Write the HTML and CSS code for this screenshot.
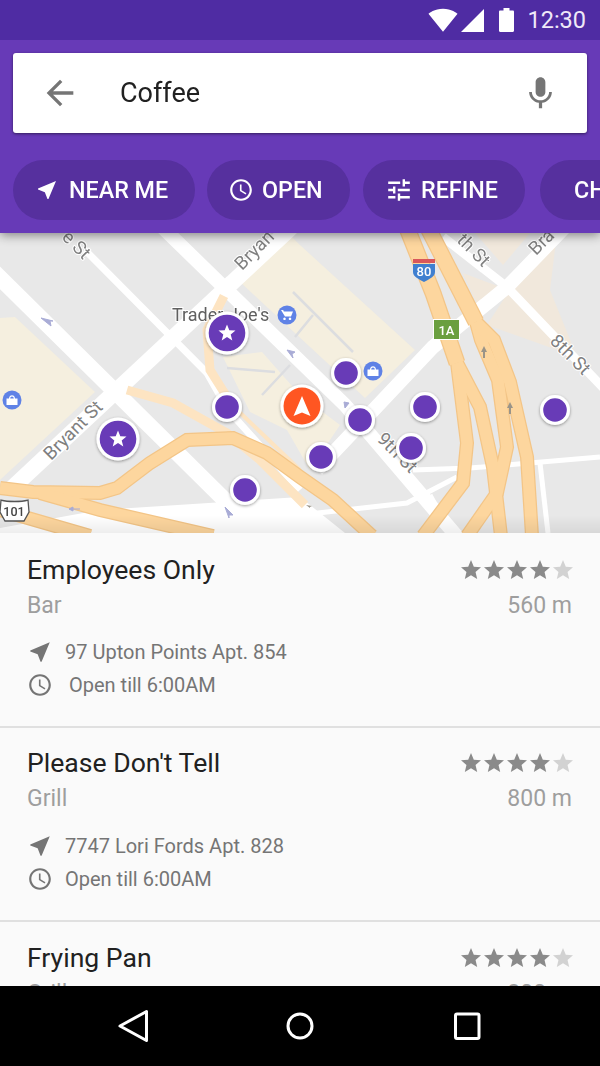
FILE: index.html
```html
<!DOCTYPE html>
<html lang="en">

<head>
    <meta charset="UTF-8" />
    <title>Coffee search</title>
    <link rel="stylesheet" href="styles.css">
</head>

<body>

    <!-- Shared icons -->
    <svg class="icon-defs" width="0" height="0">
        <symbol id="i-near" viewBox="0 0 24 24"><path d="M21 3L3 10.53v.98l6.84 2.65L12.48 21h.98L21 3z" /></symbol>
        <symbol id="i-clock" viewBox="0 0 24 24"><path d="M11.99 2C6.47 2 2 6.48 2 12s4.47 10 9.99 10C17.52 22 22 17.52 22 12S17.52 2 11.99 2zM12 20c-4.42 0-8-3.58-8-8s3.58-8 8-8 8 3.58 8 8-3.58 8-8 8z" /><path d="M12.5 7H11v6l5.25 3.15.75-1.23-4.5-2.67z" /></symbol>
        <symbol id="i-star" viewBox="0 0 24 24"><path d="M12 17.27L18.18 21l-1.64-7.03L22 9.24l-7.19-.61L12 2 9.19 8.63 2 9.24l5.46 4.73L5.82 21z" /></symbol>
    </svg>

    <header class="top">
        <div class="status">
            <svg class="st-wifi" viewBox="0 0 24 24" preserveAspectRatio="none"><path d="M12.01 21.49L23.64 7c-.45-.34-4.93-4-11.64-4C5.28 3 .81 6.66.36 7l11.63 14.49.01.01.01-.01z" /></svg>
            <svg class="st-signal" viewBox="0 0 23 23"><path d="M0 23h23V0z" /></svg>
            <svg class="st-battery" viewBox="0 0 15 24"><path d="M4.500 0h6v2.500h3.300c.7 0 1.200.5 1.200 1.200v19.100c0 .7-.5 1.200-1.200 1.200H1.200C.5 24 0 23.500 0 22.800V3.700c0-.7.5-1.200 1.200-1.200h3.300z" /></svg>
            <span class="clock">12:30</span>
        </div>

        <div class="search">
            <svg class="search-back" viewBox="0 0 24 24"><path d="M20 11H7.830l5.590-5.590L12 4l-8 8 8 8 1.410-1.410L7.830 13H20v-2z" /></svg>
            <span class="search-text">Coffee</span>
            <svg class="search-mic" viewBox="0 0 24 24"><path d="M12 14c1.660 0 2.990-1.340 2.990-3L15 5c0-1.660-1.340-3-3-3S9 3.340 9 5v6c0 1.660 1.340 3 3 3zm5.300-3c0 3-2.540 5.100-5.300 5.100S6.700 14 6.700 11H5c0 3.410 2.720 6.230 6 6.720V21h2v-3.280c3.280-.48 6-3.300 6-6.720h-1.700z" /></svg>
        </div>

        <!-- Filtros -->
        <div class="chips">
            <div class="chip chip-near"><svg class="chip-icon"><use href="#i-near" /></svg>NEAR ME</div>
            <div class="chip chip-open"><svg class="chip-icon"><use href="#i-clock" /></svg>OPEN</div>
            <div class="chip chip-refine"><svg class="chip-icon" viewBox="2 2 20 20"><path d="M3 17v2h6v-2H3zM3 5v2h10V5H3zm10 16v-2h8v-2h-8v-2h-2v6h2zM7 9v2H3v2h4v2h2V9H7zm14 4v-2H11v2h10zm-6-4h2V7h4V5h-4V3h-2v6z" /></svg>REFINE</div>
            <div class="chip chip-cheap">CH</div>
        </div>
    </header>

    <!-- Mapa -->
    <svg class="map" viewBox="0 233 600 300">
        <defs>
            <filter id="pin-shadow" x="-30%" y="-30%" width="160%" height="160%">
                <feDropShadow dx="0" dy="1" stdDeviation="1.500" flood-color="#000" flood-opacity="0.4" />
            </filter>
            <linearGradient id="map-fade" x1="0" y1="0" x2="0" y2="1">
                <stop offset="0" stop-color="#000" stop-opacity="0" />
                <stop offset="1" stop-color="#000" stop-opacity="0.07" />
            </linearGradient>
            <symbol id="pin" viewBox="-15 -15 30 30" overflow="visible">
                <circle r="15" fill="#fff" />
                <circle r="11.800" fill="#673ab7" />
            </symbol>
            <g id="pin-star">
                <circle r="21.500" fill="#fff" />
                <circle r="18.300" fill="#673ab7" />
                <path fill="#fff" d="M0-8.500L2.300-2.700 8.500-2.400 3.700 1.500 5.300 7.500 0 4.100-5.300 7.500-3.700 1.500-8.500-2.400-2.300-2.700z" />
            </g>
            <g id="bag">
                <circle r="9.500" fill="#5f82e6" />
                <path fill="#fff" d="M-5.500-1.500h11v6.500h-11zM-3-1.500c0-4.500 6-4.500 6 0h-1.200c0-2.800-3.600-2.800-3.600 0z" />
            </g>
            <g id="cart">
                <circle r="9.500" fill="#5f82e6" />
                <path fill="#fff" d="M-6-5h2.200l.6 1.500H6L4 1.500h-6zM-2.500 2.500a1.300 1.300 0 1 0 .01 0zM3 2.500a1.300 1.300 0 1 0 .01 0z" />
            </g>
        </defs>

        <g class="map-art">
            <rect x="0" y="233" width="600" height="300" fill="#e8e8e8" />

            <!-- Quarteirões -->
            <path class="block" d="M0 318L15 317 95 392 0 480z" />
            <path class="block" d="M240 282L288 233 300 245 415 350 365 398z" />
            <path class="block" d="M223 357L262 352 300 395 340 425 310 470 287 430 250 412z" />
            <path class="block-tan" d="M463 273L503 288 482 315z" />
            <path class="block-tan" d="M513 285L557 233 550 290 577 357 487 325z" />
            <path class="block-tan" d="M475 233L530 233 503 265z" />

            <!-- Ruas -->
            <path class="road" d="M-10 268L240 515" stroke-width="16" />
            <path class="road" d="M10 490L310 210" stroke-width="16" />
            <path class="road" d="M160 225L345 405 460 540" stroke-width="14" />
            <path class="road" d="M317 470L433 347 507 287 570 222" stroke-width="14" />
            <path class="road" d="M443 237L507 287 610 395" stroke-width="9" />
            <path class="road" d="M85 250L207 373 228 410 300 490" stroke-width="7" />
            <path class="road" d="M413 470L470 468 600 457" stroke-width="5" />
            <path class="road" d="M540 463L548 533" stroke-width="5" />
            <path class="road" d="M300 515L407 503 457 477" stroke-width="5" />
            <path class="road" d="M430 495L450 533" stroke-width="5" />
            <path class="road-wide" d="M0 533V528L100 510 300 497 345 533z" />

            <!-- Contornos dos prédios -->
            <path class="outline" d="M293 292L313 312 353 352M313 315L295 337M227 368L275 372M262 395L290 365" />

            <!-- Rampas -->
            <path class="ramp" d="M224 296L207 330 210 370 232 405" />
            <path class="ramp ramp-thin" d="M232 405L300 470" />
            <path class="ramp" d="M127 390L173 403 227 433 260 460 305 505" />

            <!-- Vias expressas -->
            <path class="hw" d="M0 488L33 492 100 493 117 488 150 463 187 440 233 438 267 453 300 477 333 500 372 536" />
            <path class="hw" d="M40 493L100 510 213 536" />
            <path class="hw" d="M0 510L45 523 90 536" />
            <path class="hw" d="M457 363L467 443 463 483 423 536" />
            <path class="hw" d="M457 363L480 407 493 467 501 536" />
            <path class="hw" d="M476 322L481 340 498 380 507 447 497 493 467 536" />
            <path class="hw" d="M476 322L494 340 510 382 527 457 532 536" />
            <path class="hw hw-big" d="M407 228L433 293 457 363" />
            <path class="hw hw-big" d="M428 228L476 322" />
            <path class="hw-in" d="M0 488L33 492 100 493 117 488 150 463 187 440 233 438 267 453 300 477 333 500 372 536" />
            <path class="hw-in" d="M40 493L100 510 213 536" />
            <path class="hw-in" d="M0 510L45 523 90 536" />
            <path class="hw-in" d="M457 363L467 443 463 483 423 536" />
            <path class="hw-in" d="M457 363L480 407 493 467 501 536" />
            <path class="hw-in" d="M476 322L481 340 498 380 507 447 497 493 467 536" />
            <path class="hw-in" d="M476 322L494 340 510 382 527 457 532 536" />
            <path class="hw-in hw-big" d="M407 228L433 293 457 363" />
            <path class="hw-in hw-big" d="M428 228L476 322" />

            <!-- Setas de sentido -->
            <path class="arrow-soft" d="M41 318l10 8-1-5 3 0zM287 350l8 2-3 2 1 4zM225 507l8 8-4 0 0 3zM345 408l-1-6 5 1zM72 509h8M73 507l-4 2 4 2z" />
            <path class="arrow-dark" d="M484 346l-3 6h2v6h2v-6h2zM510 402l-3 6h2v6h2v-6h2zM306 505l4 3 0-1 2-1z" />

            <!-- Nomes das ruas -->
            <text class="street" transform="translate(51 461) rotate(-45)">Bryant St</text>
            <text class="street" transform="translate(242 271) rotate(-45)">Bryan</text>
            <text class="street" transform="translate(61 238) rotate(45)">e St</text>
            <text class="street" transform="translate(376 440) rotate(45)">9th St</text>
            <text class="street" transform="translate(549 342) rotate(45)">8th St</text>
            <text class="street" transform="translate(456 241) rotate(45)">th St</text>
            <text class="street" transform="translate(536 256) rotate(-45)">Bra</text>
            <text class="poi" x="172" y="321">Trader Joe's</text>

            <!-- Placas -->
            <path fill="#3f7fd0" d="M413 264h22v8c0 5-6 7-11 10-5-3-11-5-11-10z" />
            <rect x="413" y="259" width="22" height="4" fill="#d9575a" />
            <text class="shield" x="424" y="276">80</text>
            <rect x="433" y="319" width="27" height="21" fill="#fff" />
            <rect x="434" y="320" width="25" height="19" fill="#6a9f3f" />
            <text class="shield" x="446.500" y="335">1A</text>
            <path fill="#fff" stroke="#555" stroke-width="1.300" d="M1 500c7 2 20 2 27 0l1 12-5 9H5l-5-9z" />
            <text class="shield shield-dark" x="14" y="516">101</text>

            <use href="#cart" x="287" y="315" />
            <use href="#bag" x="12" y="400" />
            <use href="#bag" x="373" y="371" />

            <rect x="0" y="515" width="600" height="18" fill="url(#map-fade)" />
        </g>

        <!-- Marcadores -->
        <g filter="url(#pin-shadow)">
            <use href="#pin-star" x="227" y="333" />
            <use href="#pin-star" x="118" y="439" />
            <use href="#pin" x="331" y="358" width="30" height="30" />
            <use href="#pin" x="212" y="392" width="30" height="30" />
            <use href="#pin" x="345" y="405" width="30" height="30" />
            <use href="#pin" x="410" y="392" width="30" height="30" />
            <use href="#pin" x="396" y="433" width="30" height="30" />
            <use href="#pin" x="306" y="442" width="30" height="30" />
            <use href="#pin" x="230" y="475" width="30" height="30" />
            <use href="#pin" x="540" y="395" width="30" height="30" />
            <circle cx="302" cy="406" r="21.500" fill="#fff" />
            <circle cx="302" cy="406" r="18.500" fill="#ff5722" />
            <path fill="#fff" d="M302 396L310.500 416 302 412.500 293.500 416z" />
        </g>
    </svg>

    <!-- Resultados -->
    <main class="results">
        <article class="place place-first">
            <div class="place-head">
                <div>
                    <div class="place-name">Employees Only</div>
                    <div class="place-type">Bar</div>
                </div>
                <div class="place-side">
                    <div class="stars">
                        <svg class="star"><use href="#i-star" /></svg>
                        <svg class="star"><use href="#i-star" /></svg>
                        <svg class="star"><use href="#i-star" /></svg>
                        <svg class="star"><use href="#i-star" /></svg>
                        <svg class="star star-off"><use href="#i-star" /></svg>
                    </div>
                    <div class="place-dist">560 m</div>
                </div>
            </div>
            <div class="place-line line-addr">
                <svg class="line-icon"><use href="#i-near" /></svg>
                <span>97 Upton Points Apt. 854</span>
            </div>
            <div class="place-line">
                <svg class="line-icon"><use href="#i-clock" /></svg>
                <span class="hours-wide">Open till 6:00AM</span>
            </div>
        </article>

        <article class="place">
            <div class="place-head">
                <div>
                    <div class="place-name">Please Don't Tell</div>
                    <div class="place-type">Grill</div>
                </div>
                <div class="place-side">
                    <div class="stars">
                        <svg class="star"><use href="#i-star" /></svg>
                        <svg class="star"><use href="#i-star" /></svg>
                        <svg class="star"><use href="#i-star" /></svg>
                        <svg class="star"><use href="#i-star" /></svg>
                        <svg class="star star-off"><use href="#i-star" /></svg>
                    </div>
                    <div class="place-dist">800 m</div>
                </div>
            </div>
            <div class="place-line line-addr">
                <svg class="line-icon"><use href="#i-near" /></svg>
                <span>7747 Lori Fords Apt. 828</span>
            </div>
            <div class="place-line">
                <svg class="line-icon"><use href="#i-clock" /></svg>
                <span>Open till 6:00AM</span>
            </div>
        </article>

        <article class="place place-last">
            <div class="place-head">
                <div>
                    <div class="place-name">Frying Pan</div>
                    <div class="place-type">Grill</div>
                </div>
                <div class="place-side">
                    <div class="stars">
                        <svg class="star"><use href="#i-star" /></svg>
                        <svg class="star"><use href="#i-star" /></svg>
                        <svg class="star"><use href="#i-star" /></svg>
                        <svg class="star"><use href="#i-star" /></svg>
                        <svg class="star star-off"><use href="#i-star" /></svg>
                    </div>
                    <div class="place-dist">800 m</div>
                </div>
            </div>
        </article>
    </main>

    <!-- Barra de navegação -->
    <nav class="navbar">
        <svg class="nav-icon" viewBox="0 0 32 36"><path d="M29.500 3.500v29L3 18z" /></svg>
        <svg class="nav-icon" viewBox="0 0 32 36"><circle cx="16" cy="18" r="12" /></svg>
        <svg class="nav-icon" viewBox="0 0 32 36"><rect x="4.500" y="6" width="23.500" height="24.500" rx="1.500" /></svg>
    </nav>

</body>

</html>
```

FILE: styles.css
```css
html,
body {
    margin: 0;
    height: 100%;
}

body {
    width: 600px;
    height: 1066px;
    display: flex;
    flex-direction: column;
    overflow: hidden;
    font-family: Roboto, sans-serif;
    background: #fafafa;
}

.icon-defs {
    display: block;
    height: 0;
}

/* Topo */
.top {
    position: relative;
    z-index: 2;
    height: 233px;
    flex: none;
    background: #673ab7;
    box-shadow: 0 2px 10px rgba(0, 0, 0, 0.45);
}

.status {
    height: 40px;
    display: flex;
    align-items: center;
    justify-content: flex-end;
    padding-right: 14px;
    background: #4f2ca3;
    color: #fff;
}

.status svg {
    fill: #fff;
    flex: none;
}

.st-wifi {
    width: 30px;
    height: 30px;
    margin-right: 3px;
}

.st-signal {
    width: 23px;
    height: 23px;
    margin-right: 15px;
    margin-top: 1px;
}

.st-battery {
    width: 15px;
    height: 24px;
    margin-right: 13px;
}

.clock {
    font-size: 23.500px;
    color: #efe9f8;
}

/* Busca */
.search {
    display: flex;
    align-items: center;
    height: 80px;
    margin: 13px 13px 0;
    padding: 0 27px;
    background: #fff;
    border-radius: 3px;
    box-shadow: 0 1px 3px rgba(0, 0, 0, 0.5);
}

.search svg {
    fill: #757575;
    flex: none;
}

.search-back {
    width: 40px;
    height: 40px;
}

.search-text {
    flex: 1;
    margin-left: 40px;
    font-size: 27px;
    color: #212121;
}

.search-mic {
    width: 39px;
    height: 39px;
}

/* Chips */
.chips {
    display: flex;
    margin: 27px 0 0 13px;
}

.chip {
    flex: none;
    display: flex;
    align-items: center;
    box-sizing: border-box;
    height: 60px;
    padding-left: 22px;
    border-radius: 30px;
    background: #56309e;
    color: #fff;
    font-size: 23.300px;
    font-weight: 500;
    white-space: nowrap;
}

.chip-icon {
    width: 24px;
    height: 24px;
    margin-right: 10px;
    fill: #fff;
}

.chip-near {
    width: 182px;
    margin-right: 12px;
}

.chip-open {
    width: 143px;
    margin-right: 13px;
    padding-left: 21px;
}

.chip-open .chip-icon {
    width: 26px;
    height: 26px;
    margin-right: 8px;
}

.chip-refine {
    width: 162px;
    margin-right: 15px;
    padding-left: 24px;
}

.chip-cheap {
    padding-left: 34px;
    width: 60px;
    border-radius: 30px 0 0 30px;
}

/* Mapa */
.map {
    display: block;
    flex: none;
    width: 600px;
    height: 300px;
    font-family: Roboto, sans-serif;
}

.map-art {
    filter: blur(0.5px);
}

.block {
    fill: #f5efdf;
}

.block-tan {
    fill: #f1e8dc;
}

.road,
.outline,
.ramp,
.hw,
.hw-in {
    fill: none;
}

.road {
    stroke: #fff;
}

.road-wide {
    fill: #fff;
}

.outline {
    stroke: #dcdde0;
    stroke-width: 2.500;
}

.ramp {
    stroke: #fde4c2;
    stroke-width: 9;
}

.ramp-thin {
    stroke-width: 4;
}

.hw {
    stroke: #f3c587;
    stroke-width: 14;
}

.hw-in {
    stroke: #fdd69e;
    stroke-width: 11.500;
}

.hw.hw-big {
    stroke-width: 17;
}

.hw-in.hw-big {
    stroke-width: 14.500;
}

.arrow-soft {
    fill: #a9acd6;
    stroke: #a9acd6;
}

.arrow-dark {
    fill: #9a9488;
}

.street {
    font-size: 18.500px;
    fill: #808080;
    stroke: #fff;
    stroke-width: 2px;
    paint-order: stroke;
}

.poi {
    font-size: 18px;
    fill: #5f5f5f;
    stroke: #fff;
    stroke-width: 2px;
    paint-order: stroke;
}

.shield {
    font-size: 13px;
    font-weight: 500;
    fill: #fff;
    text-anchor: middle;
}

.shield-dark {
    fill: #444;
    font-size: 12.500px;
}

/* Resultados */
.results {
    flex: 1;
    min-height: 0;
    overflow: hidden;
    background: #fafafa;
}

.place {
    height: 192px;
    padding: 0 28px 0 27px;
    border-bottom: 2px solid #e0e0e0;
}

.place-first {
    height: 193px;
}

.place-last {
    border-bottom: none;
}

.place-head {
    display: flex;
    justify-content: space-between;
    box-sizing: border-box;
    padding-top: 19px;
    height: 97px;
}

.place-first .place-head {
    padding-top: 21px;
    height: 98px;
}

.place-last .place-head {
    padding-top: 20px;
}

.place-name {
    font-size: 26.600px;
    line-height: 32px;
    color: #212121;
}

.place-type,
.place-dist {
    font-size: 23px;
    line-height: 34px;
    margin-top: 3px;
    color: #9e9e9e;
}

.place-side {
    text-align: right;
}

.stars {
    display: flex;
    justify-content: flex-end;
    height: 32px;
    margin-right: -3px;
    align-items: center;
}

.star {
    width: 24px;
    height: 24px;
    margin-left: -1px;
    fill: #8a8a8a;
}

.star-off {
    fill: #d2d2d2;
}

.place-line {
    display: flex;
    align-items: center;
    height: 33px;
    font-size: 20px;
    color: #757575;
}

.line-addr {
    margin-top: 4px;
}

.line-icon {
    flex: none;
    width: 26px;
    height: 26px;
    margin: 0 12px 0 0;
    fill: #757575;
}

.hours-wide {
    margin-left: 4px;
}

/* Navegação */
.navbar {
    flex: none;
    height: 80px;
    background: #000;
    display: grid;
    grid-template-columns: 32px 32px 32px;
    column-gap: 135px;
    justify-content: center;
    align-items: center;
}

.nav-icon {
    width: 32px;
    height: 36px;
    fill: none;
    stroke: #fff;
    stroke-width: 3;
    stroke-linejoin: round;
}
```
